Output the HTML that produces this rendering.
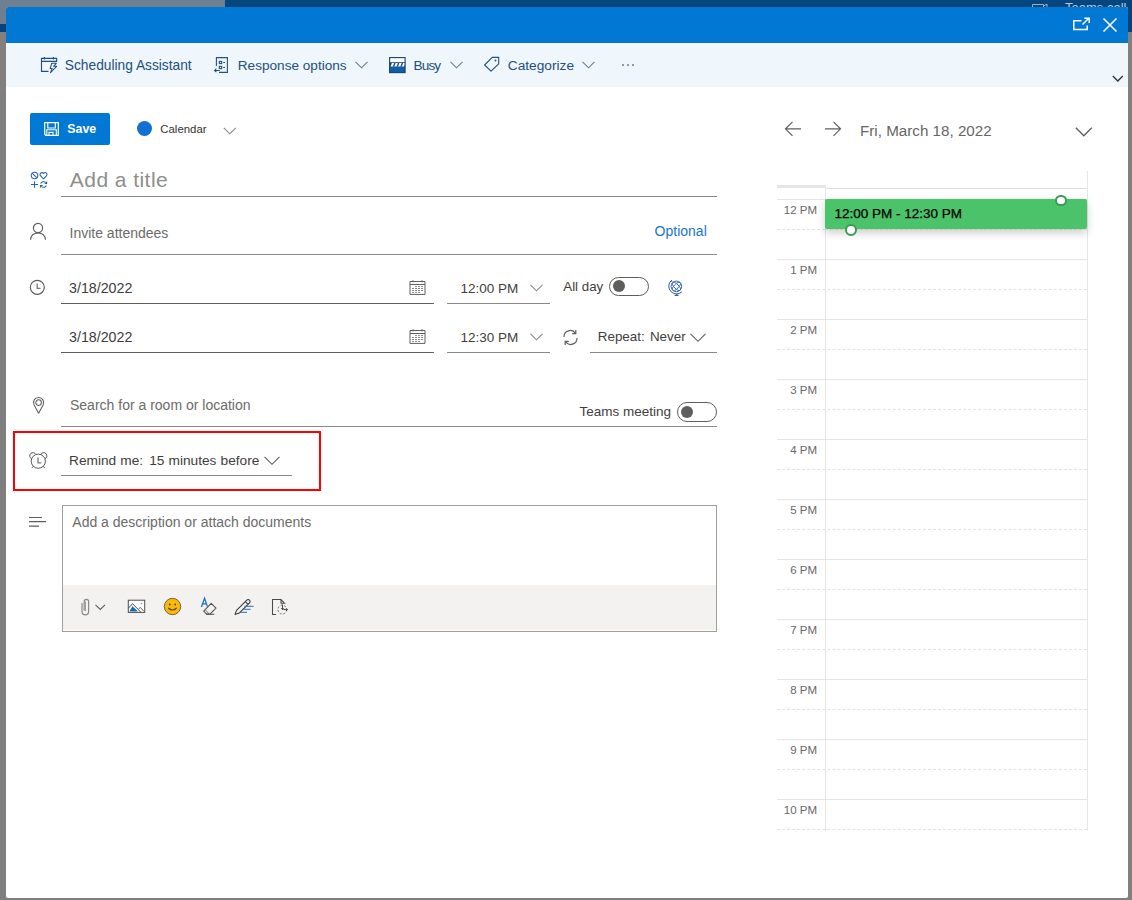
<!DOCTYPE html>
<html><head><meta charset="utf-8">
<style>
html,body{margin:0;padding:0;}
body{width:1132px;height:900px;position:relative;overflow:hidden;background:#7f7f7f;font-family:"Liberation Sans",sans-serif;}
.a{position:absolute;}
.t{position:absolute;line-height:1;white-space:pre;font-family:"Liberation Sans",sans-serif;}
.ln{position:absolute;height:1px;background:#8a8886;}
svg{position:absolute;overflow:visible;}
.tb{color:#23507f;font-size:14px;}
.ph{color:#6c6b6a;font-size:14px;}
.dk{color:#3f3e3d;font-size:14px;}
.hr{position:absolute;left:777px;width:310px;height:1px;background:#e5e5e5;}
.hh{position:absolute;left:777px;width:310px;height:0;border-top:1px dashed #e3e3e3;}
.hl{position:absolute;width:60px;left:757px;text-align:right;color:#686868;font-size:11.5px;line-height:1;font-family:"Liberation Sans",sans-serif;}
</style></head><body>
<!-- background page behind overlay -->
<div class="a" style="left:0;top:0;width:225px;height:8px;background:#6e7f8f"></div>
<div class="a" style="left:225px;top:0;width:907px;height:8px;background:#06467f"></div>
<div class="a" style="left:0;top:0;width:6px;height:24px;background:#6e7f8f"></div>
<div class="a" style="left:0;top:24px;width:6px;height:8px;background:#05447a"></div>
<div class="a" style="left:0;top:32px;width:6px;height:60px;background:#837f7c"></div>
<div class="a" style="left:1128px;top:0;width:4px;height:32px;background:#05447a"></div>
<div class="a" style="left:1128px;top:32px;width:4px;height:868px;background:#82807e"></div>
<div class="t" style="left:1065px;top:1px;font-size:13px;color:#b9c6d3">Teams call</div>
<svg style="left:1030px;top:0px" width="20" height="8" viewBox="0 0 20 8"><path d="M2.5 8 V4.5 H13.5 V8 M13.5 6 L17 4 V8" fill="none" stroke="#9fb1c4" stroke-width="1"/></svg>

<!-- dialog -->
<div class="a" style="left:6px;top:7px;width:1122px;height:891px;background:#fff;border-radius:2px;overflow:hidden">
  <div class="a" style="left:0;top:0;width:1122px;height:36px;background:#0078d4"></div>
  <div class="a" style="left:0;top:36px;width:1122px;height:44px;background:#eff6fc"></div>
</div>

<!-- header icons -->
<svg style="left:1072px;top:17px" width="20" height="16" viewBox="0 0 20 16">
  <path d="M9.5 3.8 H1.8 V12.5 H15.2 V8.5" fill="none" stroke="#fff" stroke-width="1.5"/>
  <path d="M10.5 7.5 L16.5 1.5 M12.3 1.3 H17.2 V6" fill="none" stroke="#fff" stroke-width="1.5"/>
</svg>
<svg style="left:1102px;top:17px" width="16" height="16" viewBox="0 0 16 16">
  <path d="M1.5 1.5 L14.5 14.5 M14.5 1.5 L1.5 14.5" fill="none" stroke="#fff" stroke-width="1.6"/>
</svg>

<!-- toolbar -->
<svg style="left:38px;top:54px" width="24" height="22" viewBox="0 0 24 22">
  <path d="M10.5 17.4 H3.5 V4.4 H18.6 V7.3 H3.5" fill="none" stroke="#23507f" stroke-width="1.15"/>
  <path d="M6.4 3 V5.4 M15.4 3 V5.4" stroke="#23507f" stroke-width="1.1"/>
  <path d="M13.7 9.3 H18.3 L15.6 12.3 H18.6 L12.5 18.6 L14.2 14.4 H12.2 Z" fill="none" stroke="#23507f" stroke-width="1.05" stroke-linejoin="round"/>
</svg>
<div class="t tb" style="left:64.8px;top:58.9px;font-size:13.75px">Scheduling Assistant</div>

<svg style="left:210px;top:54px" width="24" height="22" viewBox="0 0 24 22">
  <path d="M6.4 12 V3.6 H17.4 V18.4 H9" fill="none" stroke="#23507f" stroke-width="1.1"/>
  <rect x="9.3" y="7.4" width="2.4" height="2.2" fill="none" stroke="#23507f" stroke-width="1.1"/>
  <rect x="9.3" y="12.4" width="2.4" height="2.2" fill="none" stroke="#23507f" stroke-width="1.1"/>
  <path d="M13.2 8.5 H15 M13.2 13.5 H15" stroke="#23507f" stroke-width="1"/>
  <path d="M9.8 16.4 H4.6 M6.4 14.6 L4.5 16.4 L6.4 18.2" fill="none" stroke="#23507f" stroke-width="1.05"/>
</svg>
<div class="t tb" style="left:237.8px;top:58.9px;font-size:13.6px">Response options</div>
<svg style="left:355px;top:61px" width="13" height="8" viewBox="0 0 13 8"><path d="M0.5 0.8 L6.5 6.8 L12.5 0.8" fill="none" stroke="#6b7f92" stroke-width="1.1"/></svg>

<svg style="left:389px;top:57px" width="17" height="16" viewBox="0 0 17 16">
  <rect x="0.6" y="0.6" width="15.5" height="15" fill="#fff"/>
  <rect x="0.6" y="5.2" width="15.5" height="4.5" fill="#1b4a7e"/>
  <path d="M2.90 6.1 H5.10 L3.80 9.5 H1.60 Z" fill="#fff"/><path d="M6.65 6.1 H8.85 L7.55 9.5 H5.35 Z" fill="#fff"/><path d="M10.40 6.1 H12.60 L11.30 9.5 H9.10 Z" fill="#fff"/><path d="M14.15 6.1 H16.35 L15.05 9.5 H12.85 Z" fill="#fff"/>
  <rect x="0.6" y="9.7" width="15.5" height="5.9" fill="#0f5ea8"/>
  <rect x="0.6" y="0.6" width="15.5" height="15" fill="none" stroke="#1b3f6a" stroke-width="1.1"/>
</svg>
<div class="t tb" style="left:413.6px;top:58.9px;font-size:13.6px;letter-spacing:-0.9px">Busy</div>
<svg style="left:450px;top:61px" width="13" height="8" viewBox="0 0 13 8"><path d="M0.5 0.8 L6.5 6.8 L12.5 0.8" fill="none" stroke="#6b7f92" stroke-width="1.1"/></svg>

<svg style="left:483px;top:56px" width="17" height="17" viewBox="0 0 17 17">
  <path d="M9.2 1.4 H15.7 V7.8 L8 15.1 L1.6 9 Z" fill="none" stroke="#23507f" stroke-width="1.1" stroke-linejoin="round"/>
  <circle cx="12.5" cy="4.5" r="0.9" fill="#23507f"/>
</svg>
<div class="t tb" style="left:507.8px;top:58.9px;font-size:13.7px">Categorize</div>
<svg style="left:582px;top:61px" width="13" height="8" viewBox="0 0 13 8"><path d="M0.5 0.8 L6.5 6.8 L12.5 0.8" fill="none" stroke="#6b7f92" stroke-width="1.1"/></svg>
<svg style="left:621px;top:63px" width="14" height="4" viewBox="0 0 14 4">
  <circle cx="2" cy="2" r="1" fill="#6b7f92"/><circle cx="7" cy="2" r="1" fill="#6b7f92"/><circle cx="12" cy="2" r="1" fill="#6b7f92"/>
</svg>
<svg style="left:1112px;top:75px" width="12" height="8" viewBox="0 0 12 8"><path d="M0.8 1 L5.8 6 L10.8 1" fill="none" stroke="#333" stroke-width="1.3"/></svg>

<!-- Save button -->
<div class="a" style="left:30px;top:113px;width:80px;height:32px;background:#0078d4;border-radius:2px"></div>
<svg style="left:43px;top:121px" width="16" height="16" viewBox="0 0 16 16">
  <path d="M1.7 1.7 H15.3 V14.3 H2.8 L1.7 13.2 Z" fill="none" stroke="#fff" stroke-width="1.2"/>
  <path d="M4.8 1.7 V7 H12.3 V1.7" fill="none" stroke="#fff" stroke-width="1.1"/>
  <path d="M3.8 14.3 V8.8 H13.3 V14.3 M6 14.3 V11.4 H10 V14.3" fill="none" stroke="#fff" stroke-width="1.1"/>
</svg>
<div class="t" style="left:67.3px;top:123.3px;font-size:12.4px;font-weight:700;color:#fff">Save</div>

<!-- Calendar selector -->
<div class="a" style="left:136.5px;top:121.3px;width:15.2px;height:15.2px;border-radius:50%;background:#1170d2"></div>
<div class="t" style="left:160.3px;top:124px;font-size:11.4px;color:#323130">Calendar</div>
<svg style="left:223px;top:127px" width="14" height="8" viewBox="0 0 14 8"><path d="M0.8 0.8 L6.8 6.8 L12.8 0.8" fill="none" stroke="#8a8886" stroke-width="1.1"/></svg>

<!-- Title -->
<svg style="left:28px;top:168px" width="24" height="24" viewBox="0 0 24 24">
  <circle cx="6.5" cy="7.5" r="3.3" fill="none" stroke="#2563a8" stroke-width="1.05"/>
  <path d="M4.3 5.3 L8.7 9.7" stroke="#2563a8" stroke-width="1.05"/>
  <path d="M15.5 10.8 L12.4 7.7 A1.75 1.75 0 0 1 15.5 5.4 A1.75 1.75 0 0 1 18.6 7.7 Z" fill="none" stroke="#2563a8" stroke-width="1.05" stroke-linejoin="round"/>
  <path d="M6.5 13.2 V19.8 M3 16.5 H10" stroke="#2563a8" stroke-width="1.1"/>
  <path d="M12.6 15.6 A3.3 3.3 0 0 1 17.6 14.4" fill="none" stroke="#2563a8" stroke-width="1.1"/>
  <path d="M19.2 13 V16 H16.2 Z" fill="#2563a8"/>
  <path d="M18.4 17.4 A3.3 3.3 0 0 1 13.4 18.6" fill="none" stroke="#2563a8" stroke-width="1.1"/>
  <path d="M12 20 V17 H15 Z" fill="#2563a8"/>
</svg>
<div class="t" style="left:69.8px;top:168.9px;font-size:21px;color:#8f8e8d;letter-spacing:0.45px">Add a title</div>
<div class="ln" style="left:61px;top:196px;width:656px"></div>

<!-- Invite -->
<svg style="left:29px;top:222px" width="18" height="19" viewBox="0 0 18 19">
  <circle cx="9" cy="6" r="4.6" fill="none" stroke="#605e5c" stroke-width="1.2"/>
  <path d="M1.5 17.8 C2 13.5 5 11 9 11 C13 11 16 13.5 16.5 17.8" fill="none" stroke="#605e5c" stroke-width="1.2"/>
</svg>
<div class="t ph" style="left:69.5px;top:225.7px">Invite attendees</div>
<div class="t" style="left:654.6px;top:224px;font-size:14px;color:#1c74c9">Optional</div>
<div class="ln" style="left:61px;top:254px;width:656px"></div>

<!-- Date row 1 -->
<svg style="left:29px;top:279px" width="17" height="17" viewBox="0 0 17 17">
  <circle cx="8.3" cy="8.3" r="7" fill="none" stroke="#605e5c" stroke-width="1.2"/>
  <path d="M8.2 4.6 V9.4 H11.6" fill="none" stroke="#7a7a7a" stroke-width="1.35"/>
</svg>
<div class="t dk" style="left:69px;top:280.8px;font-size:14.25px">3/18/2022</div>
<svg style="left:400px;top:274px" width="30" height="26" viewBox="0 0 30 26">
  <path d="M10 7.5 H25 V20.4 H10 Z M10 10.5 H25" fill="none" stroke="#5f5f5f" stroke-width="1"/>
  <path d="M13 6.3 V8.3 M22 6.3 V8.3" stroke="#5f5f5f" stroke-width="1.1"/>
  <path d="M15 12.6h2M18 12.6h2M21 12.6h2M12 14.5h2M15 14.5h2M18 14.5h2M21 14.5h2M12 16.5h2M15 16.5h2M18 16.5h2M21 16.5h2M12 18.4h2M15 18.4h2M18 18.4h2" stroke="#7a7a7a" stroke-width="0.9"/>
</svg>
<div class="ln" style="left:61px;top:303px;width:373px;background:#605e5c"></div>
<div class="t dk" style="left:460.5px;top:281.9px;font-size:13.5px">12:00 PM</div>
<svg style="left:530px;top:284px" width="13" height="8" viewBox="0 0 13 8"><path d="M0.5 0.8 L6.5 6.8 L12.5 0.8" fill="none" stroke="#8a8886" stroke-width="1.1"/></svg>
<div class="ln" style="left:447px;top:303px;width:103px"></div>
<div class="t dk" style="left:563.3px;top:280.1px;font-size:13.3px">All day</div>
<div class="a" style="left:609px;top:276.5px;width:38px;height:17px;border:1px solid #605e5c;border-radius:10px"></div>
<div class="a" style="left:613px;top:280px;width:12px;height:12px;border-radius:50%;background:#605e5c"></div>
<svg style="left:660px;top:272px" width="30" height="30" viewBox="0 0 30 30">
  <circle cx="16.4" cy="14.4" r="5.3" fill="none" stroke="#3165b5" stroke-width="1"/>
  <ellipse cx="16.4" cy="14.4" rx="2.2" ry="5.3" fill="none" stroke="#3165b5" stroke-width="0.9" transform="rotate(45 16.4 14.4)"/>
  <ellipse cx="16.4" cy="14.4" rx="2.2" ry="5.3" fill="none" stroke="#3165b5" stroke-width="0.9" transform="rotate(-45 16.4 14.4)"/>
  <path d="M11.2 8.6 A7.4 7.4 0 0 0 21.8 19.8" fill="none" stroke="#3a5f94" stroke-width="1"/>
  <path d="M11.3 8 L12.2 10.2" stroke="#3a5f94" stroke-width="1"/>
  <path d="M16.6 21.8 V23.2 M14.6 23.4 H18.6" fill="none" stroke="#2f62b0" stroke-width="1.2"/>
</svg>

<!-- Date row 2 -->
<div class="t dk" style="left:69px;top:329.7px;font-size:14.25px">3/18/2022</div>
<svg style="left:400px;top:323px" width="30" height="26" viewBox="0 0 30 26">
  <path d="M10 7.5 H25 V20.4 H10 Z M10 10.5 H25" fill="none" stroke="#5f5f5f" stroke-width="1"/>
  <path d="M13 6.3 V8.3 M22 6.3 V8.3" stroke="#5f5f5f" stroke-width="1.1"/>
  <path d="M15 12.6h2M18 12.6h2M21 12.6h2M12 14.5h2M15 14.5h2M18 14.5h2M21 14.5h2M12 16.5h2M15 16.5h2M18 16.5h2M21 16.5h2M12 18.4h2M15 18.4h2M18 18.4h2" stroke="#7a7a7a" stroke-width="0.9"/>
</svg>
<div class="ln" style="left:61px;top:352px;width:373px;background:#605e5c"></div>
<div class="t dk" style="left:460.5px;top:330.8px;font-size:13.5px">12:30 PM</div>
<svg style="left:530px;top:333px" width="13" height="8" viewBox="0 0 13 8"><path d="M0.5 0.8 L6.5 6.8 L12.5 0.8" fill="none" stroke="#8a8886" stroke-width="1.1"/></svg>
<div class="ln" style="left:447px;top:352px;width:103px"></div>
<svg style="left:562px;top:329px" width="17" height="17" viewBox="0 0 17 17">
  <path d="M2 8 A6.3 6.3 0 0 1 13.5 4.3 M15 9 A6.3 6.3 0 0 1 3.5 12.7" fill="none" stroke="#605e5c" stroke-width="1.2"/>
  <path d="M13.8 1 V4.6 H10.2 M3.2 16 V12.4 H6.8" fill="none" stroke="#605e5c" stroke-width="1.2"/>
</svg>
<div class="t dk" style="left:597.8px;top:330.4px;font-size:13.4px;word-spacing:1.5px">Repeat: Never</div>
<svg style="left:690px;top:333px" width="17" height="10" viewBox="0 0 17 10"><path d="M0.5 0.8 L8 8.3 L15.5 0.8" fill="none" stroke="#605e5c" stroke-width="1.1"/></svg>
<div class="ln" style="left:590px;top:352px;width:127px"></div>

<!-- Location -->
<svg style="left:32px;top:397px" width="14" height="18" viewBox="0 0 14 18">
  <path d="M6.6 16.3 L2.1 7.9 A5.1 5.1 0 1 1 11.1 7.9 Z" fill="none" stroke="#5f5f5f" stroke-width="1.05" stroke-linejoin="round"/>
  <circle cx="6.6" cy="5.6" r="2.8" fill="none" stroke="#5f5f5f" stroke-width="1.05"/>
</svg>
<div class="t ph" style="left:70px;top:398.3px">Search for a room or location</div>
<div class="t dk" style="left:579.5px;top:405px;font-size:13.5px">Teams meeting</div>
<div class="a" style="left:677px;top:402px;width:38px;height:18px;border:1px solid #605e5c;border-radius:10px"></div>
<div class="a" style="left:681px;top:405.5px;width:12px;height:12px;border-radius:50%;background:#605e5c"></div>
<div class="ln" style="left:61px;top:426px;width:656px"></div>

<!-- Reminder -->
<div class="a" style="left:13px;top:431px;width:304px;height:56px;border:2px solid #ff0000"></div>
<svg style="left:24px;top:446px" width="30" height="30" viewBox="0 0 30 30">
  <circle cx="14.3" cy="15.2" r="7.1" fill="none" stroke="#5a5a5a" stroke-width="1"/>
  <path d="M7.63 12.77 A3.2 3.2 0 1 1 11.87 8.53 M16.73 8.53 A3.2 3.2 0 1 1 20.97 12.77" fill="none" stroke="#5a5a5a" stroke-width="1"/>
  <path d="M14 11.5 V16.8 H17.3" fill="none" stroke="#7a7a7a" stroke-width="1.3"/>
  <path d="M9.5 20.2 L7.8 22 M19.1 20.2 L20.8 22" stroke="#5a5a5a" stroke-width="1"/>
</svg>
<div class="t dk" style="left:69px;top:453.5px;font-size:13.7px;word-spacing:0.3px">Remind me:<span style="margin-left:2px"> </span>15 minutes before</div>
<svg style="left:264px;top:456px" width="17" height="10" viewBox="0 0 17 10"><path d="M0.5 0.8 L8 8.3 L15.5 0.8" fill="none" stroke="#605e5c" stroke-width="1.1"/></svg>
<div class="ln" style="left:61px;top:475px;width:231px"></div>

<!-- Description -->
<svg style="left:28px;top:515px" width="20" height="13" viewBox="0 0 20 13">
  <path d="M1 2.5 H14 M1 6.6 H18 M1 11.2 H11" stroke="#605e5c" stroke-width="1.2"/>
</svg>
<div class="a" style="left:62px;top:505px;width:653px;height:125px;border:1px solid #a19f9d;background:#fff"></div>
<div class="a" style="left:63px;top:585px;width:653px;height:45px;background:#f3f2f1"></div>
<div class="t ph" style="left:72.3px;top:514.7px">Add a description or attach documents</div>

<svg style="left:80px;top:597px" width="11" height="19" viewBox="0 0 11 19">
  <path d="M2 6 V14.5 A3.3 3.3 0 0 0 8.6 14.5 V4.5 A2.2 2.2 0 0 0 4.2 4.5 V13.5" fill="none" stroke="#8a8886" stroke-width="1.2"/>
  <path d="M5.2 4.5 V14" stroke="#a19f9d" stroke-width="1.6"/>
</svg>
<svg style="left:95px;top:604px" width="11" height="7" viewBox="0 0 11 7"><path d="M0.5 0.8 L5.3 5.5 L10 0.8" fill="none" stroke="#605e5c" stroke-width="1.1"/></svg>
<svg style="left:127px;top:599px" width="19" height="15" viewBox="0 0 19 15">
  <rect x="1.3" y="1.2" width="16.4" height="12.2" fill="#fff" stroke="#4f4f4f" stroke-width="1"/>
  <path d="M2.4 12.6 L5.5 7.2 L10.9 12.6 Z" fill="#0f6cbd"/>
  <path d="M1.5 9.2 L5.5 4.6 L13.6 13" fill="none" stroke="#4a4a4a" stroke-width="1"/>
  <path d="M11.6 10.2 L13.2 8.3 L17.2 12.6" fill="none" stroke="#5a5a5a" stroke-width="0.9"/>
  <circle cx="14.4" cy="4.5" r="0.8" fill="#8a8a8a"/>
</svg>
<svg style="left:163px;top:597px" width="19" height="19" viewBox="0 0 19 19">
  <circle cx="9.5" cy="9.5" r="8.2" fill="#f8b80c" stroke="#6a5a2a" stroke-width="0.9"/>
  <circle cx="6.8" cy="7.5" r="0.9" fill="#5b4a1a"/><circle cx="12.2" cy="7.5" r="0.9" fill="#5b4a1a"/>
  <path d="M5.3 11 Q9.5 15 13.7 11" fill="none" stroke="#5b4a1a" stroke-width="1.1"/>
</svg>
<svg style="left:196px;top:594px" width="26" height="26" viewBox="0 0 26 26">
  <path d="M5.4 13 L8.6 4.2 L11.4 12.6 M6.8 9.8 H10.4" fill="none" stroke="#1a6fc4" stroke-width="1.25"/>
  <path d="M15.2 9.3 L20 14.1 L14.2 19.9 H10.4 L7.7 17.2 Z" fill="none" stroke="#505050" stroke-width="1.05" stroke-linejoin="round"/>
  <path d="M9.2 15.8 L13 19.6" stroke="#707070" stroke-width="1"/>
  <path d="M10 20.3 H18.2" stroke="#505050" stroke-width="1.05"/>
</svg>
<svg style="left:234px;top:598px" width="21" height="18" viewBox="0 0 21 18">
  <path d="M1 16.6 L2.5 12.4 L12.8 2.1 A1.8 1.8 0 0 1 15.5 4.8 L5.2 15.1 Z M11.3 3.6 L14 6.3" fill="none" stroke="#3a3a3a" stroke-width="1.05" stroke-linejoin="round"/>
  <path d="M10.5 8.3 H19.5 M8.2 11.3 H16.6 M6 14.3 H13" stroke="#2d6ca8" stroke-width="1"/>
</svg>
<svg style="left:271px;top:598px" width="18" height="18" viewBox="0 0 18 18">
  <path d="M5 16.5 H1.5 V1.5 H10 L13.5 5.3 H10 V1.5" fill="none" stroke="#4a4a4a" stroke-width="1.05"/>
  <circle cx="11.3" cy="11.6" r="4.4" fill="none" stroke="#6a6a6a" stroke-width="0.95" stroke-dasharray="2 1.7"/>
  <path d="M11.5 6.5 V11.6 M10.1 10.2 L11.5 11.6 L12.9 10.2 M12.3 11.6 H16.5 M15.1 10.2 L16.5 11.6 L15.1 13" fill="none" stroke="#4a4a4a" stroke-width="1"/>
</svg>

<!-- Calendar pane header -->
<svg style="left:784px;top:121px" width="18" height="16" viewBox="0 0 18 16">
  <path d="M17 7.8 H1.5 M8.5 0.8 L1.5 7.8 L8.5 14.8" fill="none" stroke="#605e5c" stroke-width="1.2"/>
</svg>
<svg style="left:824px;top:121px" width="18" height="16" viewBox="0 0 18 16">
  <path d="M1 7.8 H16.5 M9.5 0.8 L16.5 7.8 L9.5 14.8" fill="none" stroke="#605e5c" stroke-width="1.2"/>
</svg>
<div class="t" style="left:860px;top:122.8px;font-size:15.2px;color:#666">Fri, March 18, 2022</div>
<svg style="left:1075px;top:127px" width="18" height="10" viewBox="0 0 18 10"><path d="M0.8 0.8 L8.8 8.8 L16.8 0.8" fill="none" stroke="#605e5c" stroke-width="1.3"/></svg>

<!-- Calendar grid -->
<div class="a" style="left:777px;top:185px;width:48px;height:3px;background:#e6e6e6"></div>
<div class="a" style="left:825px;top:188px;width:262px;height:1px;background:#e1dfdd"></div>
<div class="a" style="left:825px;top:185px;width:1px;height:646px;background:#e6e6e6"></div>
<div class="a" style="left:1087px;top:171px;width:1px;height:660px;background:#e6e6e6"></div>
<div class="hr" style="top:199px"></div><div class="hh" style="top:229px;width:48px"></div><div class="hh" style="top:229px;left:825px;width:262px;border-top-color:#ececec"></div>
<div class="hr" style="top:259px"></div><div class="hh" style="top:289px"></div>
<div class="hr" style="top:319px"></div><div class="hh" style="top:349px"></div>
<div class="hr" style="top:379px"></div><div class="hh" style="top:409px"></div>
<div class="hr" style="top:439px"></div><div class="hh" style="top:469px"></div>
<div class="hr" style="top:499px"></div><div class="hh" style="top:529px"></div>
<div class="hr" style="top:559px"></div><div class="hh" style="top:589px"></div>
<div class="hr" style="top:619px"></div><div class="hh" style="top:649px"></div>
<div class="hr" style="top:679px"></div><div class="hh" style="top:709px"></div>
<div class="hr" style="top:739px"></div><div class="hh" style="top:769px"></div>
<div class="hr" style="top:799px"></div><div class="hh" style="top:829px"></div>
<div class="hl" style="top:205.1px">12 PM</div>
<div class="hl" style="top:265.1px">1 PM</div>
<div class="hl" style="top:325.1px">2 PM</div>
<div class="hl" style="top:385.1px">3 PM</div>
<div class="hl" style="top:445.1px">4 PM</div>
<div class="hl" style="top:505.1px">5 PM</div>
<div class="hl" style="top:565.1px">6 PM</div>
<div class="hl" style="top:625.1px">7 PM</div>
<div class="hl" style="top:685.1px">8 PM</div>
<div class="hl" style="top:745.1px">9 PM</div>
<div class="hl" style="top:805.1px">10 PM</div>

<!-- event -->
<div class="a" style="left:825px;top:199px;width:262px;height:30px;background:#4ac36b;border-radius:2px;box-shadow:0 4px 9px rgba(0,0,0,0.2)"></div>
<div class="t" style="left:834.5px;top:207.3px;font-size:13.5px;color:#000;-webkit-text-stroke:0.25px #000">12:00 PM - 12:30 PM</div>
<div class="a" style="left:845px;top:224px;width:7.8px;height:7.8px;border-radius:50%;background:#fff;border:2px solid #3a9a57"></div>
<div class="a" style="left:1055.2px;top:194.5px;width:7.8px;height:7.8px;border-radius:50%;background:#fff;border:2px solid #3a9a57"></div>
</body></html>
